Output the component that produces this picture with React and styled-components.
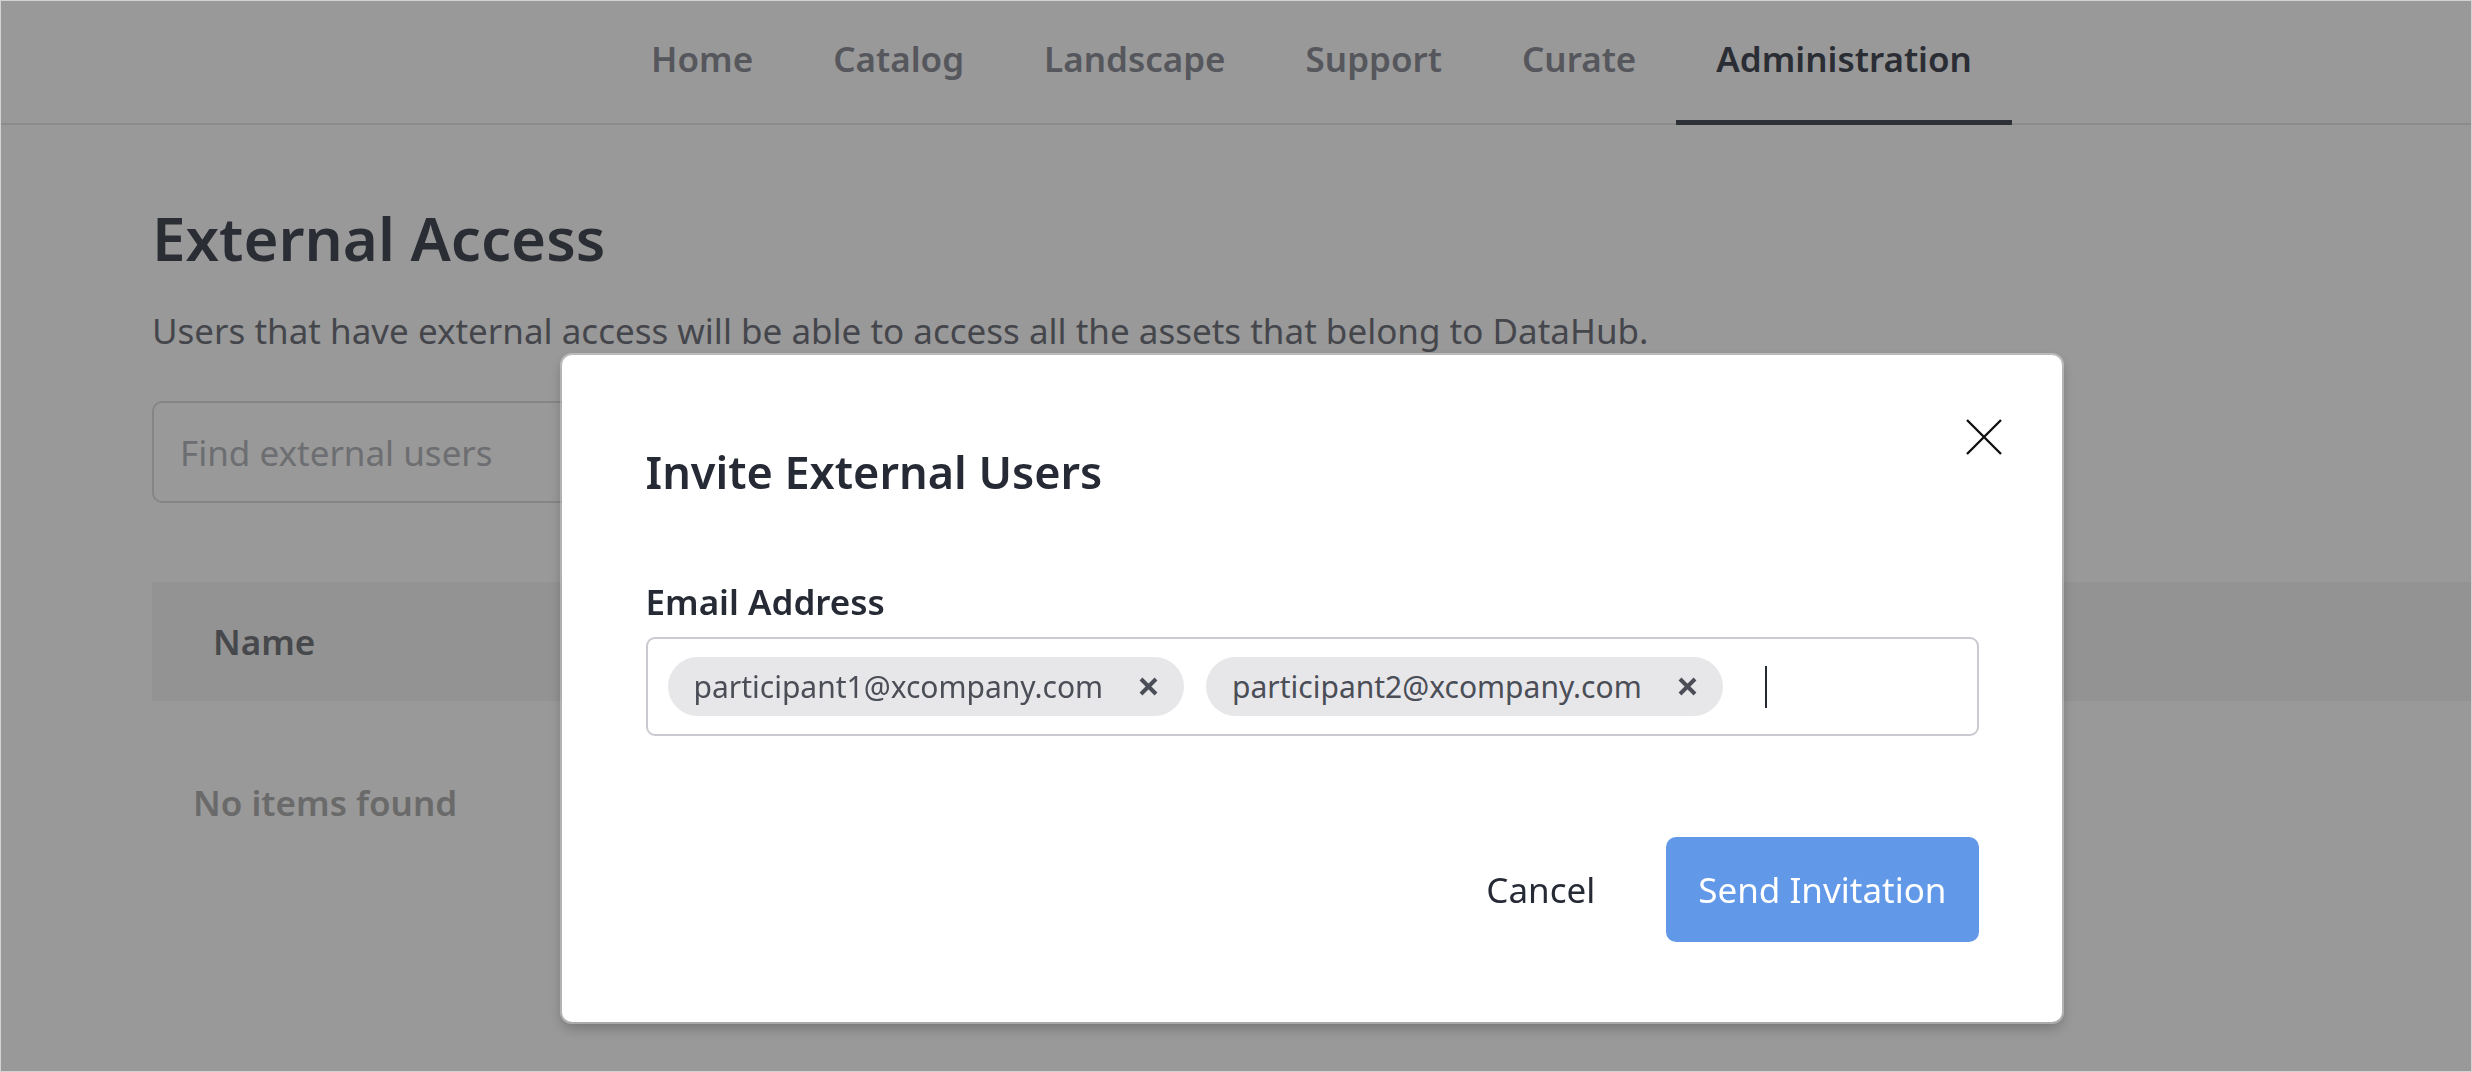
import React from 'react'
import styled, { createGlobalStyle } from 'styled-components'

const GlobalStyle = createGlobalStyle`
  * { box-sizing: border-box; }
  html, body { margin: 0; padding: 0; background: #fff; }
  body {
    font-family: 'Noto Sans', 'Open Sans', sans-serif;
    color: #262a35;
    overflow: hidden;
  }
`

const navItems = ['Home', 'Catalog', 'Landscape', 'Support', 'Curate', 'Administration']
const emails = ['participant1@xcompany.com', 'participant2@xcompany.com']

function App() {
  return (
    <Page>
      <GlobalStyle />
      <Header>
        {navItems.map((item) => (
          <Tab key={item} active={item === 'Administration'}>{item}</Tab>
        ))}
      </Header>

      <Content>
        <Title>External Access</Title>
        <Subtitle>Users that have external access will be able to access all the assets that belong to DataHub.</Subtitle>
        <Search placeholder="Find external users" />
        <TableHead>
          <HeadCell>Name</HeadCell>
        </TableHead>
        <Empty>No items found</Empty>
      </Content>

      <Overlay>
        <Modal>
          <CloseButton aria-label="close">
            <svg width="36" height="36" viewBox="0 0 36 36">
              <path d="M1 1 L35 35 M35 1 L1 35" stroke="#111" strokeWidth="2.4" fill="none" />
            </svg>
          </CloseButton>
          <ModalTitle>Invite External Users</ModalTitle>
          <Label>Email Address</Label>
          <TagInput>
            {emails.map((email) => (
              <Chip key={email}>
                <span>{email}</span>
                <ChipRemove>
                  <svg width="19" height="19" viewBox="0 0 19 19">
                    <path d="M2 2 L17 17 M17 2 L2 17" stroke="#4b4e57" strokeWidth="4" fill="none" />
                  </svg>
                </ChipRemove>
              </Chip>
            ))}
            <Caret />
          </TagInput>
          <Actions>
            <GhostButton>Cancel</GhostButton>
            <PrimaryButton>Send Invitation</PrimaryButton>
          </Actions>
        </Modal>
      </Overlay>
      <Frame />
    </Page>
  )
}

const Page = styled.div`
  width: 2472px;
  height: 1072px;
  position: relative;
  overflow: hidden;
`

const Header = styled.nav`
  display: flex;
  justify-content: center;
  height: 125px;
  padding-left: 151px;
  border-bottom: 2px solid #e8e8e8;
`

const Tab = styled.div`
  display: flex;
  align-items: center;
  height: 125px;
  padding: 0 40px 3px;
  margin-bottom: -2px;
  font-size: 35px;
  font-weight: 600;
  color: ${(p) => (p.active ? '#494c59' : '#8f919b')};
  border-bottom: 5px solid ${(p) => (p.active ? '#4c505d' : 'transparent')};
`

const Content = styled.main`
  padding: 77px 0 0 152px;
`

const Title = styled.h1`
  margin: 0;
  font-size: 60px;
  font-weight: 600;
  line-height: 1.2;
  color: #494c59;
`

const Subtitle = styled.p`
  margin: 36px 0 0;
  font-size: 35px;
  line-height: 1.2;
  color: #73767f;
`

const Search = styled.input`
  display: block;
  margin-top: 49px;
  width: 1000px;
  height: 102px;
  padding: 0 26px;
  border: 2px solid #dedede;
  border-radius: 10px;
  font-family: inherit;
  font-size: 35px;
  color: #262a35;
  background: #fff;
  &::placeholder { color: #b6b7bc; }
`

const TableHead = styled.div`
  display: flex;
  align-items: center;
  margin-top: 79px;
  height: 119px;
  background: #f5f5f5;
  padding-left: 61px;
`

const HeadCell = styled.div`
  font-size: 35px;
  font-weight: 600;
  line-height: 1.2;
  color: #76787e;
`

const Empty = styled.div`
  margin-top: 81px;
  padding-left: 41px;
  font-size: 35px;
  font-weight: 600;
  line-height: 1.2;
  color: #b1b1b1;
`

const Overlay = styled.div`
  position: fixed;
  inset: 0;
  background: rgba(0, 0, 0, 0.4);
  display: flex;
  justify-content: center;
  align-items: flex-start;
  padding: 355px 0 0 151px;
`

const Modal = styled.section`
  position: relative;
  width: 1500px;
  padding: 90px 83px 80px 84px;
  background: #fff;
  border-radius: 10px;
  box-shadow: 0 0 0 2px rgba(255, 255, 255, 0.35), 0 6px 14px rgba(0, 0, 0, 0.25);
`

const CloseButton = styled.button`
  position: absolute;
  top: 64px;
  right: 60px;
  padding: 0;
  border: 0;
  background: none;
  display: flex;
`

const ModalTitle = styled.h2`
  margin: 0;
  font-size: 45px;
  font-weight: 600;
  line-height: 1.2;
  color: #262a35;
`

const Label = styled.div`
  margin-top: 82px;
  font-size: 35px;
  font-weight: 600;
  line-height: 1.2;
  color: #262a35;
`

const TagInput = styled.div`
  margin-top: 14px;
  display: flex;
  align-items: center;
  gap: 22px;
  height: 99px;
  padding: 0 20px;
  border: 2px solid #cacbd0;
  border-radius: 9px;
`

const Chip = styled.div`
  display: flex;
  align-items: center;
  gap: 36px;
  height: 59px;
  padding: 0 26px;
  border-radius: 30px;
  background: #e7e7ea;
  font-size: 30px;
  color: #4b4e57;
`

const ChipRemove = styled.span`
  display: flex;
`

const Caret = styled.span`
  width: 2px;
  height: 42px;
  margin-left: 20px;
  background: #262a35;
`

const Actions = styled.div`
  display: flex;
  justify-content: flex-end;
  align-items: center;
  gap: 38px;
  margin-top: 101px;
`

const GhostButton = styled.button`
  height: 105px;
  padding: 0 33px;
  border: 0;
  background: none;
  font-family: inherit;
  font-size: 35px;
  color: #262a35;
`

const PrimaryButton = styled.button`
  height: 105px;
  padding: 0 32px;
  border: 0;
  border-radius: 10px;
  background: #6298e8;
  font-family: inherit;
  font-size: 35px;
  color: #fff;
`

const Frame = styled.div`
  position: fixed;
  inset: 0;
  border: 1px solid #d2d2d2;
  pointer-events: none;
`

export default App
